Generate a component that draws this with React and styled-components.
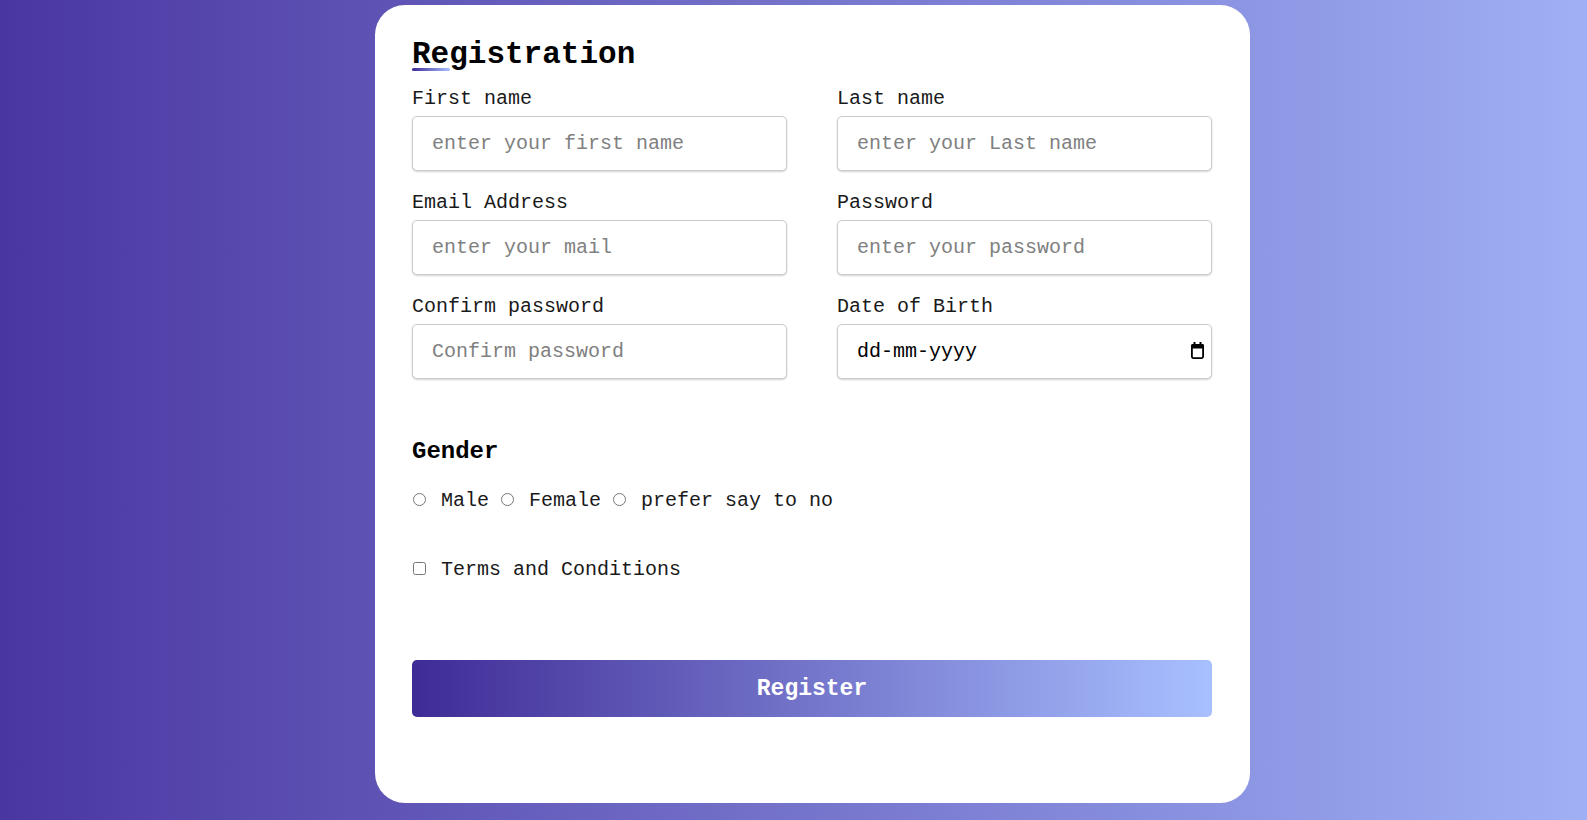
import React from 'react'
import styled, { createGlobalStyle } from 'styled-components'

const GlobalStyle = createGlobalStyle`
  * { box-sizing: border-box; }
  html, body { margin: 0; padding: 0; height: 100%; }
  body {
    font-family: "Liberation Mono", "Courier New", monospace;
    background: linear-gradient(to right, #4a36a1, #9fb0f5);
    overflow: hidden;
  }
`

const Page = styled.div`
  height: 820px;
  padding: 5px 0 0 375px;
`

const Card = styled.form`
  width: 875px;
  height: 798px;
  background: #fff;
  border-radius: 30px;
  padding: 34px 37px 0 37px;
  display: flex;
  flex-direction: column;
`

const Title = styled.h2`
  margin: 0;
  font-size: 31px;
  line-height: 31px;
  font-weight: bold;
  color: #000;
`

const TitleBar = styled.div`
  width: 38px;
  height: 3px;
  margin-top: -2px;
  border-radius: 2px;
  background: linear-gradient(to right, #3f2b96, #a8c0ff);
`

const Grid = styled.div`
  display: grid;
  grid-template-columns: 375px 375px;
  column-gap: 50px;
  row-gap: 20px;
  margin-top: 16px;
`

const Field = styled.div`
  display: flex;
  flex-direction: column;
  gap: 5px;
`

const Label = styled.label`
  font-size: 20px;
  line-height: 24px;
  color: #1a1a1a;
`

const InputWrap = styled.div`
  position: relative;
`

const Input = styled.input`
  display: block;
  height: 55px;
  width: 100%;
  padding: 0 36px 0 19px;
  border: 1px solid #ccc;
  border-radius: 5px;
  box-shadow: 0 1px 2px rgba(0, 0, 0, 0.18);
  font-family: "Liberation Mono", "Courier New", monospace;
  font-size: 20px;
  color: #000;
  outline: none;
  &::placeholder { color: ${p => (p.$darkHint ? '#000' : '#808080')}; }
`

const CalendarIcon = styled.svg`
  position: absolute;
  right: 8px;
  top: 18px;
  width: 13px;
  height: 17px;
  pointer-events: none;
`

const SectionTitle = styled.h3`
  margin: 59px 0 0 0;
  font-size: 24px;
  line-height: 28px;
  font-weight: bold;
  color: #000;
`

const OptionRow = styled.div`
  display: flex;
  align-items: center;
  margin-top: ${p => p.$gap || 0}px;
  font-size: 20px;
  line-height: 24px;
  color: #1a1a1a;
`

const Choice = styled.input`
  width: 13px;
  height: 13px;
  margin: -4px 15px 0 1px;
  accent-color: #3f2b96;
`

const ChoiceText = styled.span`
  margin-right: 11px;
`

const SubmitButton = styled.button`
  margin-top: 78px;
  height: 57px;
  width: 800px;
  border: none;
  border-radius: 5px;
  background: linear-gradient(to right, #3f2b96, #a8c0ff);
  color: #fff;
  font-family: "Liberation Mono", "Courier New", monospace;
  font-size: 23px;
  font-weight: bold;
  cursor: pointer;
`

const fields = [
  { label: 'First name', type: 'text', placeholder: 'enter your first name' },
  { label: 'Last name', type: 'text', placeholder: 'enter your Last name' },
  { label: 'Email Address', type: 'email', placeholder: 'enter your mail' },
  { label: 'Password', type: 'password', placeholder: 'enter your password' },
  { label: 'Confirm password', type: 'password', placeholder: 'Confirm password' },
  { label: 'Date of Birth', type: 'text', placeholder: 'dd-mm-yyyy', date: true },
]

const genders = ['Male', 'Female', 'prefer say to no']

export default function App() {
  return (
    <>
      <GlobalStyle />
      <Page>
        <Card onSubmit={e => e.preventDefault()}>
          <Title>Registration</Title>
          <TitleBar />
          <Grid>
            {fields.map(f => (
              <Field key={f.label}>
                <Label>{f.label}</Label>
                <InputWrap>
                  <Input type={f.type} placeholder={f.placeholder} $darkHint={f.date} />
                  {f.date && (
                    <CalendarIcon viewBox="0 0 13 17">
                      <rect x="2.5" y="0" width="2" height="3" fill="#000" />
                      <rect x="8.5" y="0" width="2" height="3" fill="#000" />
                      <rect x="0" y="2" width="13" height="4.5" rx="1.5" fill="#000" />
                      <rect x="0.9" y="3" width="11.2" height="13.1" rx="1.5" fill="none" stroke="#000" strokeWidth="1.8" />
                    </CalendarIcon>
                  )}
                </InputWrap>
              </Field>
            ))}
          </Grid>
          <SectionTitle>Gender</SectionTitle>
          <OptionRow $gap={23}>
            {genders.map(g => (
              <React.Fragment key={g}>
                <Choice type="radio" name="gender" />
                <ChoiceText>{g}</ChoiceText>
              </React.Fragment>
            ))}
          </OptionRow>
          <OptionRow $gap={45}>
            <Choice type="checkbox" />
            <ChoiceText>Terms and Conditions</ChoiceText>
          </OptionRow>
          <SubmitButton type="submit">Register</SubmitButton>
        </Card>
      </Page>
    </>
  )
}
